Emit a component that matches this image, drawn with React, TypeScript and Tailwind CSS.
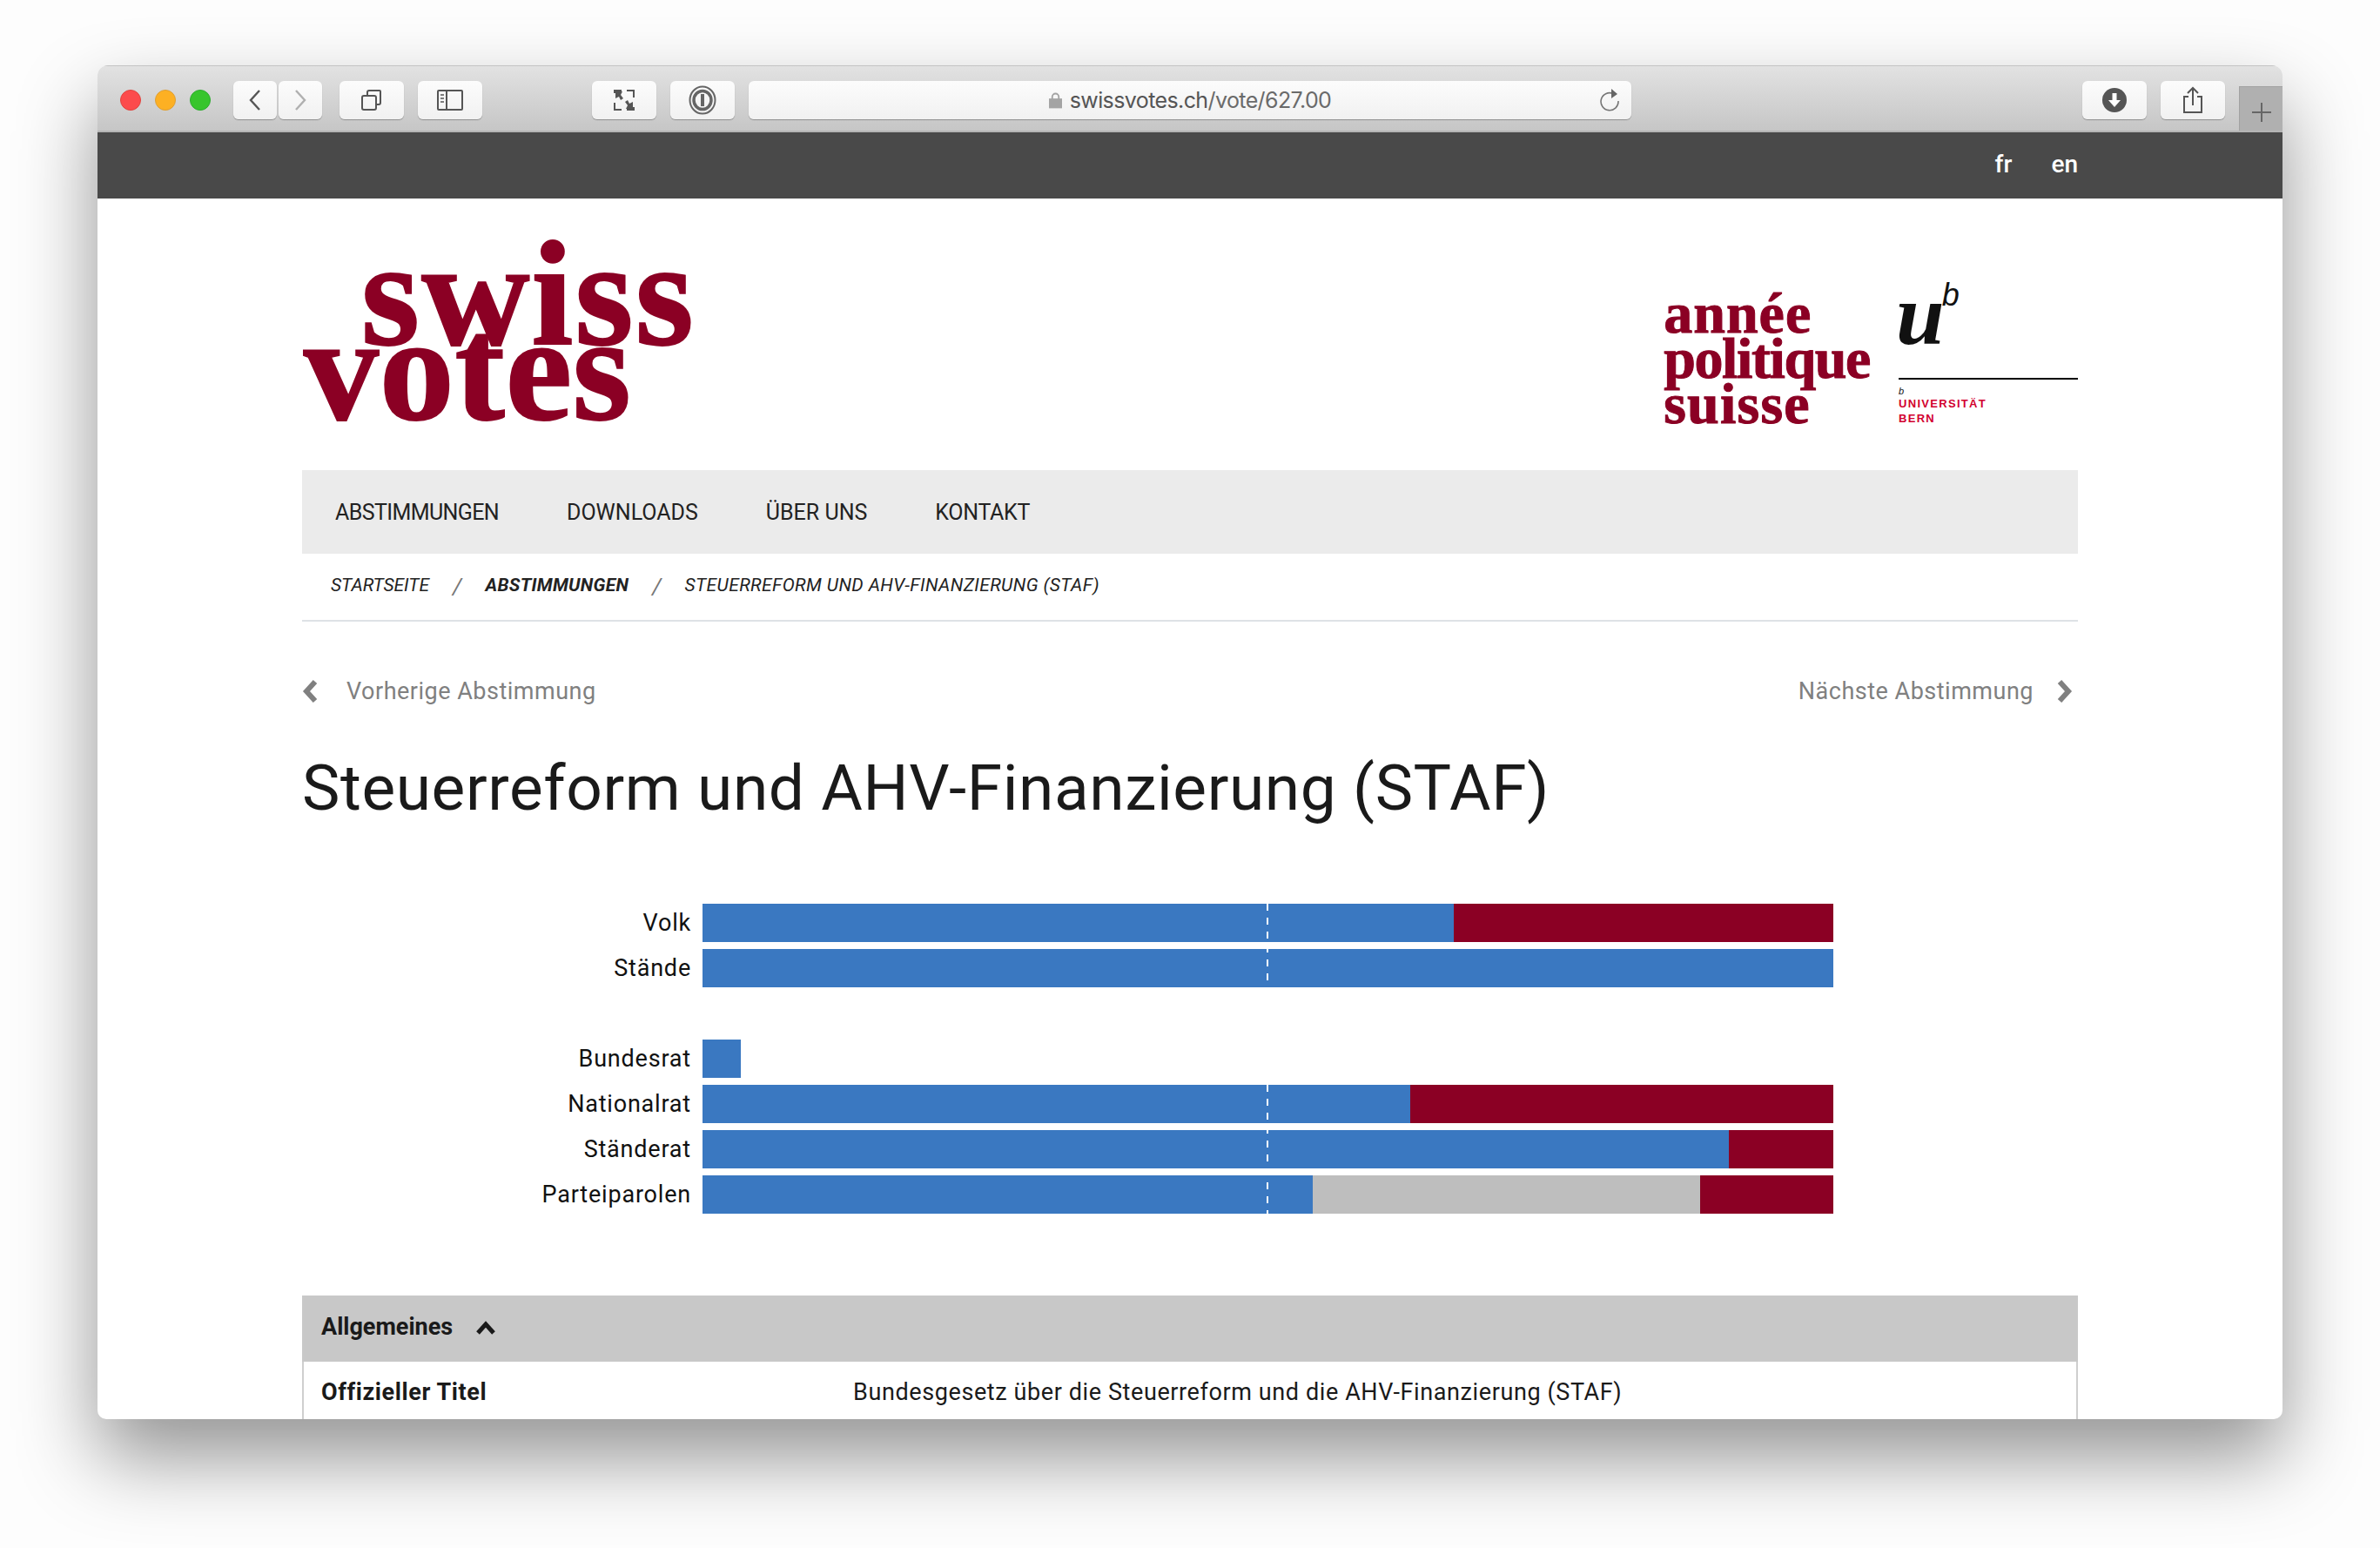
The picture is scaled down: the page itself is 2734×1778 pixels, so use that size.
const BARS = [
  { label: "Volk", mb: "mb-2", parts: [["bg-[#3a78c1]", 863], ["bg-[#8b0024]", 436]] },
  { label: "Stände", mb: "mb-[60px]", parts: [["bg-[#3a78c1]", 1299]] },
  { label: "Bundesrat", mb: "mb-2", parts: [["bg-[#3a78c1]", 44]] },
  { label: "Nationalrat", mb: "mb-2", parts: [["bg-[#3a78c1]", 813], ["bg-[#8b0024]", 486]] },
  { label: "Ständerat", mb: "mb-2", parts: [["bg-[#3a78c1]", 1179], ["bg-[#8b0024]", 120]] },
  { label: "Parteiparolen", mb: "", parts: [["bg-[#3a78c1]", 701], ["bg-[#bebebe]", 445], ["bg-[#8b0024]", 153]] },
] as const;

function ToolButton({ className, children }: { className: string; children?: React.ReactNode }) {
  return (
    <div className={`h-[44px] flex items-center justify-center rounded-[6px] bg-gradient-to-b from-[#fcfcfc] to-[#f1f1f1] shadow-[0_1px_1px_rgba(0,0,0,0.3)] ${className}`}>
      {children}
    </div>
  );
}

function Toolbar() {
  return (
    <div className="relative h-[77px] flex items-start pt-[17px] bg-gradient-to-b from-[#e2e2e2] to-[#c6c6c6] border-t border-[#c4c4c4] border-b-2 border-b-[#b4b4b4]">
      <div className="flex items-center gap-4 ml-[26px] mt-[10px] mr-[26px]">
        <span className="w-6 h-6 rounded-full bg-[#fc4b4c] border border-[#e0443e]" />
        <span className="w-6 h-6 rounded-full bg-[#fdb023] border border-[#de9f34]" />
        <span className="w-6 h-6 rounded-full bg-[#37c52c] border border-[#2dac2f]" />
      </div>
      <ToolButton className="w-[50px] mr-[2px]">
        <svg width="16" height="26" viewBox="0 0 16 26" fill="none" stroke="#555" strokeWidth="2.4"><path d="M13 2 3 13l10 11" /></svg>
      </ToolButton>
      <ToolButton className="w-[50px] mr-[20px]">
        <svg width="16" height="26" viewBox="0 0 16 26" fill="none" stroke="#b0b0b0" strokeWidth="2.4"><path d="m3 2 10 11L3 24" /></svg>
      </ToolButton>
      <ToolButton className="w-[74px] mr-4">
        <svg width="24" height="24" viewBox="0 0 24 24" fill="none" stroke="#555" strokeWidth="2"><rect x="1" y="7" width="16" height="16" rx="2" /><path d="M7 7V3a2 2 0 0 1 2-2h12a1 1 0 0 1 1 1v13a2 2 0 0 1-2 2h-3" /></svg>
      </ToolButton>
      <ToolButton className="w-[74px] mr-[126px]">
        <svg width="30" height="24" viewBox="0 0 30 24" fill="none" stroke="#555" strokeWidth="2"><rect x="1" y="1" width="28" height="22" rx="1" /><path d="M11 1v22" /><path d="M4 6h4M4 10h4M4 14h4" strokeWidth="1.6" /></svg>
      </ToolButton>
      <ToolButton className="w-[74px] mr-4">
        <svg width="26" height="26" viewBox="0 0 26 26" fill="#555"><path d="M1 1h9v2H3v2H1zM16 1h9v9h-2V3h-7zM1 16h2v7h7v2H1zM23 21h2v4h-9v-2h7z" /><path d="M3 3h8L9 7l3 4-3 2-2-4-4 2zM23 23h-8l2-4-3-4 3-2 2 4 4-2z" /></svg>
      </ToolButton>
      <ToolButton className="w-[74px] mr-4">
        <svg width="32" height="34" viewBox="0 0 32 34" fill="none" stroke="#666"><ellipse cx="16" cy="17" rx="14.500" ry="15.500" strokeWidth="2" /><ellipse cx="16" cy="17" rx="10" ry="10.500" strokeWidth="3.500" /><path d="M16 10v14" strokeWidth="4" /></svg>
      </ToolButton>
      <ToolButton className="w-[1014px] relative">
        <svg width="15" height="20" viewBox="0 0 16 20" className="mr-[9px]" fill="#a4a4a4"><rect y="8" width="16" height="12" /><path d="M3 9V6a5 5 0 0 1 10 0v3h-2V6a3 3 0 0 0-6 0v3z" /></svg>
        <span className="pt-[2px] font-['Inter',sans-serif] text-[25px] tracking-[-0.6px] text-[#555]">swissvotes.ch<span className="text-[#6a6a6a]">/vote/627.00</span></span>
        <svg width="24" height="28" viewBox="0 0 24 28" className="absolute right-[12px] top-[8px]" fill="none" stroke="#777" strokeWidth="1.600"><path d="M15 6.500A10 10 0 1 0 21 15" /><path d="M13 1l7 6-7 5z" fill="#666" stroke="none" /></svg>
      </ToolButton>
      <div className="flex-1" />
      <ToolButton className="w-[74px] mr-4">
        <svg width="28" height="28" viewBox="0 0 28 28"><circle cx="14" cy="14" r="14" fill="#555" /><path d="M11.500 6h5v8H21l-7 8-7-8h4.500z" fill="#fff" /></svg>
      </ToolButton>
      <ToolButton className="w-[74px] mr-4">
        <svg width="24" height="32" viewBox="0 0 24 32" fill="none" stroke="#555" strokeWidth="2"><path d="M7 12H2v18h20V12h-5M12 22V2M6 8l6-6 6 6" /></svg>
      </ToolButton>
      <div className="self-end w-[50px] h-[51px] pt-2 flex items-center justify-center bg-[#b0b0b0] border-t border-l border-[#a2a2a2]">
        <svg width="24" height="24" viewBox="0 0 24 24" stroke="#666" strokeWidth="2"><path d="M12 1v22M1 12h22" /></svg>
      </div>
    </div>
  );
}

function SwissVotesLogo() {
  return (
    <div className="font-['Liberation_Serif',serif] font-bold text-[#8b0024] text-[172px] leading-[86px] tracking-[1.5px] [-webkit-text-stroke:2px_#8b0024]">
      <div className="pl-[68px] pt-[66px] tracking-[2.2px]">swiss</div>
      <div className="pl-[2px] tracking-[0.8px]">votes</div>
    </div>
  );
}

function PartnerLogos() {
  return (
    <div className="flex items-start">
      <div className="font-['Liberation_Serif',serif] font-bold text-[#8b0024] text-[66px] leading-[52px] [-webkit-text-stroke:1px_#8b0024] tracking-[-1.4px] mt-[106px] mr-[33px]">
        <div className="tracking-[1px]">année</div>
        <div>politique</div>
        <div className="tracking-[1.2px]">suisse</div>
      </div>
      <div className="w-[206px] mt-[98px]">
        <div className="flex items-start h-[110px] border-b-2 border-black">
          <span className="font-['Liberation_Serif',serif] font-bold italic text-[100px] leading-[72px] text-[#111] -ml-[3px]">u</span>
          <span className="font-['Liberation_Sans',sans-serif] italic text-[36px] leading-[36px] text-[#111] -mt-[5px] -ml-[3px]">b</span>
        </div>
        <div className="font-['Liberation_Sans',sans-serif] italic text-[11px] leading-[12px] text-[#111] mt-[7px]">b</div>
        <div className="font-['Liberation_Sans',sans-serif] font-bold text-[#d2002e] text-[13px] leading-[17px] tracking-[1.3px]">
          <div>UNIVERSITÄT</div>
          <div>BERN</div>
        </div>
      </div>
    </div>
  );
}

function VoteChart() {
  return (
    <div className="relative mt-[83px] w-[1759px]">
      {BARS.map((bar) => (
        <div key={bar.label} className={`flex items-center h-[44px] ${bar.mb}`}>
          <div className="w-[460px] pr-[13px] text-right text-[27px] tracking-[0.8px] text-[#111]">{bar.label}</div>
          <div className="flex h-full">
            {bar.parts.map(([color, width], i) => (
              <div key={i} className={`h-full ${color}`} style={{ width }} />
            ))}
          </div>
        </div>
      ))}
      {/* 50% marker */}
      <div className="absolute left-[1108px] top-0 bottom-0 w-[2px] bg-[repeating-linear-gradient(to_bottom,#fff_0,#fff_8px,transparent_8px,transparent_16px)]" />
    </div>
  );
}

export default function App() {
  return (
    <div className="w-[2734px] h-[1778px] overflow-hidden bg-[#fdfdfd] pt-[75px] pl-[112px] font-['Roboto',sans-serif]">
      <div className="w-[2510px] h-[1555px] flex flex-col overflow-hidden rounded-t-[12px] rounded-b-[10px] bg-white shadow-[0_44px_90px_rgba(0,0,0,0.42)]">
        <Toolbar />
        <div className="h-[76px] pb-[2px] flex items-center justify-end gap-[45px] pr-[235px] bg-[#494949] text-white text-[28px] font-medium">
          <span>fr</span>
          <span>en</span>
        </div>
        <div className="flex-1 overflow-hidden px-[235px]">
          <div className="flex items-start justify-between h-[312px]">
            <SwissVotesLogo />
            <PartnerLogos />
          </div>
          <nav className="h-[96px] pt-[2px] flex items-center gap-[78px] pl-[38px] bg-[#ebebeb] text-[25px] text-[#222]">
            <span className="tracking-[-0.6px]">ABSTIMMUNGEN</span>
            <span>DOWNLOADS</span>
            <span>ÜBER UNS</span>
            <span className="tracking-[-0.3px]">KONTAKT</span>
          </nav>
          <div className="h-[78px] pb-[2px] flex items-center pl-[33px] italic text-[21px] text-[#222] border-b-2 border-[#dee2e6]">
            <span>STARTSEITE</span>
            <span className="mx-[27px] text-[#777] text-[26px]">/</span>
            <span className="font-bold tracking-[0.3px]">ABSTIMMUNGEN</span>
            <span className="mx-[27px] text-[#777] text-[26px]">/</span>
            <span className="tracking-[0.4px]">STEUERREFORM UND AHV-FINANZIERUNG (STAF)</span>
          </div>
          <div className="flex items-center justify-between h-[36px] mt-[62px] text-[27px] tracking-[0.5px] text-[#808080]">
            <div className="flex items-center gap-[33px]">
              <svg width="18" height="26" viewBox="0 0 18 26" fill="none" stroke="#808080" strokeWidth="6"><path d="M15 2 5 13l10 11" /></svg>
              <span>Vorherige Abstimmung</span>
            </div>
            <div className="flex items-center gap-[27px] pr-[6px]">
              <span>Nächste Abstimmung</span>
              <svg width="18" height="26" viewBox="0 0 18 26" fill="none" stroke="#808080" strokeWidth="6"><path d="m3 2 10 11L3 24" /></svg>
            </div>
          </div>
          <h1 className="mt-[43px] text-[73px] leading-[100px] tracking-[0.6px] text-[#1a1a1a]">Steuerreform und AHV-Finanzierung (STAF)</h1>
          <VoteChart />
          <div className="mt-[94px] pb-5 border-x-2 border-[#cfcfcf]">
            <div className="h-[76px] -mx-[2px] pb-[3px] flex items-center gap-[26px] pl-[22px] bg-[#c8c8c8] text-[27px] font-bold text-[#1a1a1a]">
              <span>Allgemeines</span>
              <svg width="24" height="16" viewBox="0 0 24 16" fill="none" stroke="#1a1a1a" strokeWidth="5"><path d="m3 14 9-10 9 10" /></svg>
            </div>
            <div className="flex items-center h-[68px] pt-[3px] pl-[20px] text-[27px] tracking-[0.6px] text-[#1a1a1a]">
              <div className="w-[611px] font-bold">Offizieller Titel</div>
              <div>Bundesgesetz über die Steuerreform und die AHV-Finanzierung (STAF)</div>
            </div>
          </div>
        </div>
      </div>
    </div>
  );
}
